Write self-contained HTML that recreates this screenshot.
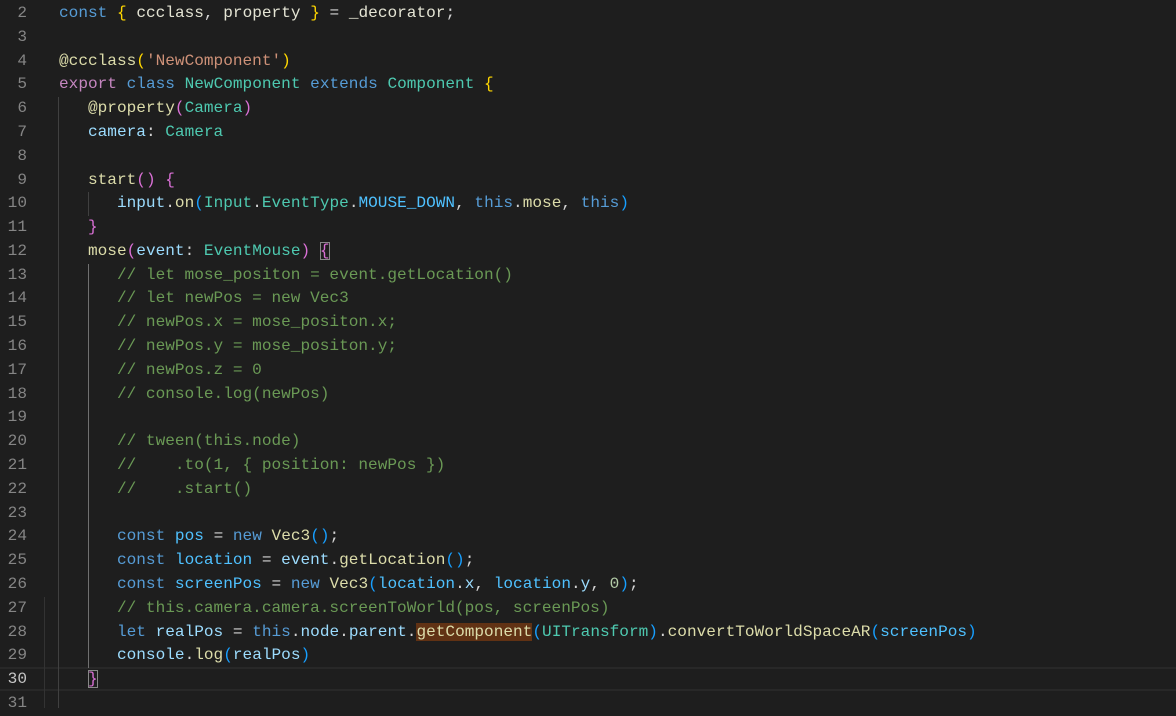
<!DOCTYPE html>
<html><head><meta charset="utf-8"><style>
body{margin:0;background:#1e1e1e;width:1176px;height:706px;overflow:hidden;position:relative;font-family:"Liberation Mono",monospace;font-size:16.1px}
.ln{position:absolute;left:0;width:27px;text-align:right;color:#858585;height:23.79px;line-height:23.79px}
.cl{position:absolute;left:59px;white-space:pre;height:23.79px;line-height:23.79px;color:#d4d4d4}
.g{position:absolute;width:1px;background:#404040}
.k{color:#569cd6}.c{color:#c586c0}.f{color:#dcdcaa}.v{color:#9cdcfe}.t{color:#4ec9b0}.s{color:#ce9178}.cm{color:#6a9955}.cn{color:#4fc1ff}.n{color:#b5cea8}.w{color:#e4e4d4}
.b1{color:#ffd700}.b2{color:#da70d6}.b3{color:#179fff}
.bx{outline:1px solid #888;outline-offset:-1px}
.hl{background:#613214}
</style></head><body>
<div style="position:absolute;left:0;right:0;top:667.3px;height:23.79px;border-top:2px solid #282828;border-bottom:2px solid #282828;box-sizing:border-box"></div>
<div class="g" style="left:44px;top:597px;height:111px;background:#333"></div>
<div class="g" style="left:58px;top:97px;height:611px"></div>
<div class="g" style="left:88px;top:192px;height:24px"></div>
<div class="g" style="left:88px;top:264px;height:404px;background:#707070"></div>
<div id="c"></div>
<script>
const L=[
'<span class="k">const</span> <span class="b1">{</span> <span class="w">ccclass</span>, <span class="w">property</span> <span class="b1">}</span> = <span class="w">_decorator</span>;',
'',
'<span class="f">@ccclass</span><span class="b1">(</span><span class="s">\'NewComponent\'</span><span class="b1">)</span>',
'<span class="c">export</span> <span class="k">class</span> <span class="t">NewComponent</span> <span class="k">extends</span> <span class="t">Component</span> <span class="b1">{</span>',
'   <span class="f">@property</span><span class="b2">(</span><span class="t">Camera</span><span class="b2">)</span>',
'   <span class="v">camera</span>: <span class="t">Camera</span>',
'',
'   <span class="f">start</span><span class="b2">()</span> <span class="b2">{</span>',
'      <span class="v">input</span>.<span class="f">on</span><span class="b3">(</span><span class="t">Input</span>.<span class="t">EventType</span>.<span class="cn">MOUSE_DOWN</span>, <span class="k">this</span>.<span class="f">mose</span>, <span class="k">this</span><span class="b3">)</span>',
'   <span class="b2">}</span>',
'   <span class="f">mose</span><span class="b2">(</span><span class="v">event</span>: <span class="t">EventMouse</span><span class="b2">)</span> <span class="b2 bx">{</span>',
'      <span class="cm">// let mose_positon = event.getLocation()</span>',
'      <span class="cm">// let newPos = new Vec3</span>',
'      <span class="cm">// newPos.x = mose_positon.x;</span>',
'      <span class="cm">// newPos.y = mose_positon.y;</span>',
'      <span class="cm">// newPos.z = 0</span>',
'      <span class="cm">// console.log(newPos)</span>',
'',
'      <span class="cm">// tween(this.node)</span>',
'      <span class="cm">//    .to(1, { position: newPos })</span>',
'      <span class="cm">//    .start()</span>',
'',
'      <span class="k">const</span> <span class="cn">pos</span> = <span class="k">new</span> <span class="f">Vec3</span><span class="b3">()</span>;',
'      <span class="k">const</span> <span class="cn">location</span> = <span class="v">event</span>.<span class="f">getLocation</span><span class="b3">()</span>;',
'      <span class="k">const</span> <span class="cn">screenPos</span> = <span class="k">new</span> <span class="f">Vec3</span><span class="b3">(</span><span class="cn">location</span>.<span class="v">x</span>, <span class="cn">location</span>.<span class="v">y</span>, <span class="n">0</span><span class="b3">)</span>;',
'      <span class="cm">// this.camera.camera.screenToWorld(pos, screenPos)</span>',
'      <span class="k">let</span> <span class="v">realPos</span> = <span class="k">this</span>.<span class="v">node</span>.<span class="v">parent</span>.<span class="f hl">getComponent</span><span class="b3">(</span><span class="t">UITransform</span><span class="b3">)</span>.<span class="f">convertToWorldSpaceAR</span><span class="b3">(</span><span class="cn">screenPos</span><span class="b3">)</span>',
'      <span class="v">console</span>.<span class="f">log</span><span class="b3">(</span><span class="v">realPos</span><span class="b3">)</span>',
'   <span class="b2 bx">}</span>',
''];
let h='';
for(let i=0;i<L.length;i++){const n=i+2,top=(2+i*23.79).toFixed(2);
h+=`<div class="ln" style="top:${top}px;${n==30?'color:#c6c6c6':''}">${n}</div><div class="cl" style="top:${top}px">${L[i]}</div>`;}
document.getElementById('c').innerHTML=h;
</script>
</body></html>
